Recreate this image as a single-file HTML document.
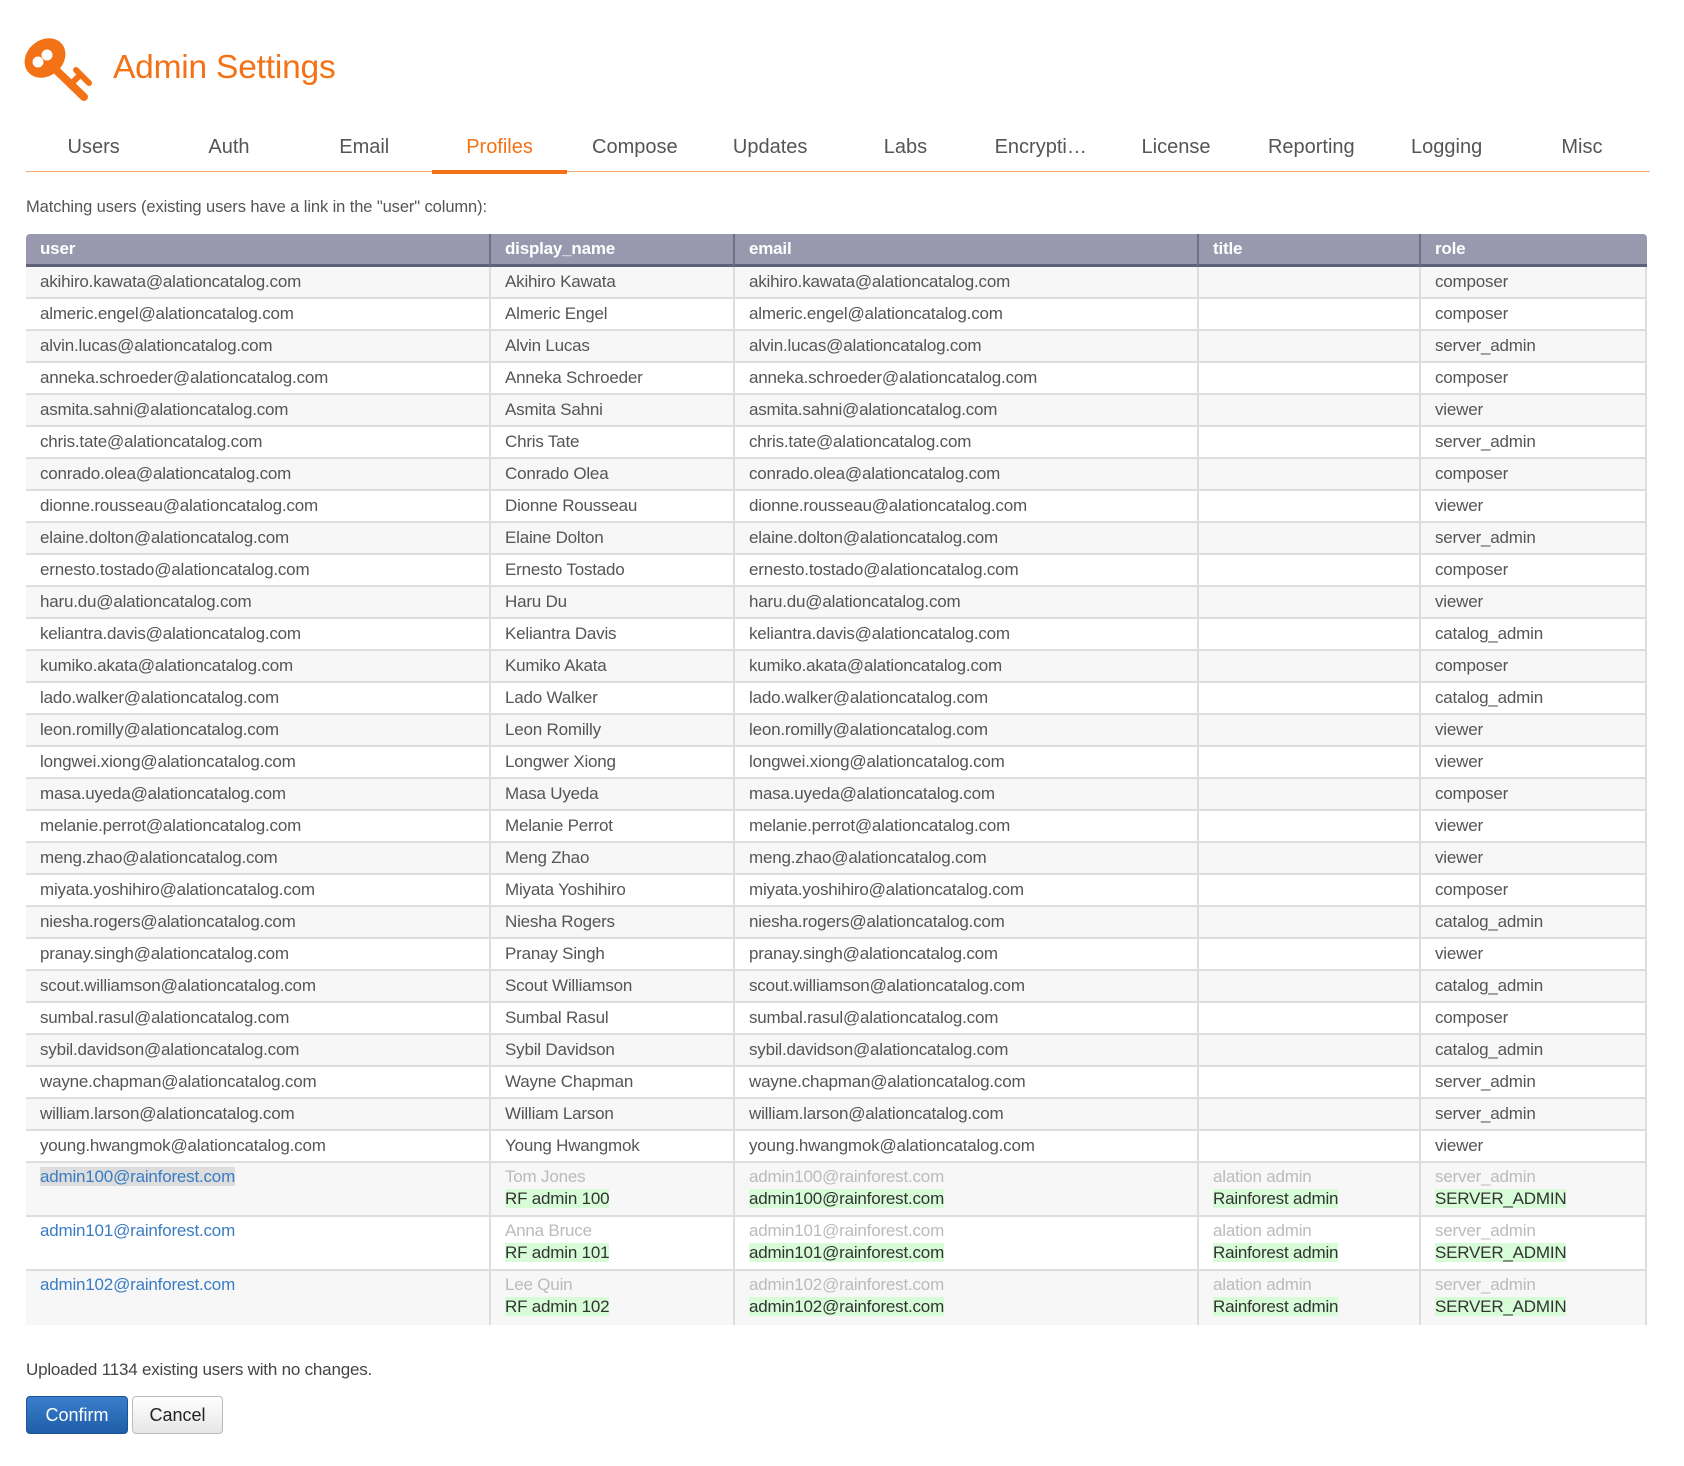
<!DOCTYPE html>
<html><head><meta charset="utf-8">
<style>
*{box-sizing:border-box;margin:0;padding:0}
body{width:1684px;height:1466px;background:#fff;font-family:"Liberation Sans",Arial,sans-serif;color:#444;position:relative;overflow:hidden}
.title{position:absolute;left:113px;top:49px;font-size:33.5px;color:#f47216;letter-spacing:-0.2px}
.tabs{position:absolute;left:26px;top:132px;width:1624px;height:40px;border-bottom:1px solid #f5a878;display:flex}
.tabs div{width:135.3px;text-align:center;font-size:20px;color:#555;line-height:30px;position:relative}
.tabs div.act{color:#f47216}
.tabs div.act:after{content:"";position:absolute;left:0;right:0;bottom:-3px;height:4px;background:#f47216}
.match{position:absolute;left:26px;top:198px;font-size:16.5px;color:#555;letter-spacing:-0.1px}
table{position:absolute;left:26px;top:234px;width:1621px;border-collapse:separate;border-spacing:0;table-layout:fixed;font-size:17px;letter-spacing:-0.2px}
th{background:#9899af;color:#fff;text-align:left;font-weight:bold;font-size:17px;height:30px;line-height:30px;padding:0 14px;border-bottom:3px solid #5f607a;border-left:2px solid #6f7088}
th:first-child{border-left:none;border-top-left-radius:4px}
th:last-child{border-top-right-radius:4px}
td{height:32px;line-height:30px;padding:0 14px;border-bottom:2px solid #ddd;border-left:2px solid #ddd;color:#555;white-space:nowrap;overflow:hidden}
td:first-child{border-left:none}
td:last-child{border-right:2px solid #ddd}
tr:nth-child(even) td{background:#f7f7f7}
tr:nth-child(odd) td{background:#fff}
tr.d td{height:54px;line-height:22px;vertical-align:top;padding-top:3px}
tr.d:last-child td{border-bottom:none}
.o{color:#bbb;display:block}
.n{background:#d8fcd8;color:#333}
a{color:#3a7cc4;text-decoration:none}
.sel{background:#ddd}
.up{position:absolute;left:26px;top:1360px;font-size:17px;color:#444;letter-spacing:-0.2px}
.btn{position:absolute;top:1396px;height:38px;border-radius:4px;font-size:18px;line-height:36px;text-align:center}
.cf{left:26px;width:102px;background:linear-gradient(#3a7ecb,#1f5ea8);color:#fff;border:1px solid #1c5396}
.cc{left:132px;width:91px;background:linear-gradient(#fff,#e6e6e6);color:#222;border:1px solid #bbb}
</style></head><body>
<svg style="position:absolute;left:0;top:0" width="120" height="120" viewBox="0 0 120 120">
<g fill="#f47216" stroke="#f47216">
<ellipse cx="45" cy="58" rx="18" ry="22" transform="rotate(50 45 58)" stroke="none"/>
<line x1="54" y1="68" x2="84" y2="97" stroke-width="8" stroke-linecap="round"/>
<line x1="71" y1="84" x2="80" y2="75" stroke-width="6" stroke-linecap="round"/>
<line x1="76" y1="70" x2="89" y2="83" stroke-width="6" stroke-linecap="round"/>
</g>
<circle cx="38" cy="62" r="5.5" fill="#fff"/>
<circle cx="47" cy="55" r="5.5" fill="#fff"/>
</svg>
<div class="title">Admin Settings</div>
<div class="tabs"><div>Users</div><div>Auth</div><div>Email</div><div class="act">Profiles</div><div>Compose</div><div>Updates</div><div>Labs</div><div>Encrypti…</div><div>License</div><div>Reporting</div><div>Logging</div><div>Misc</div></div>
<div class="match">Matching users (existing users have a link in the "user" column):</div>
<table>
<colgroup><col style="width:463px"><col style="width:244px"><col style="width:464px"><col style="width:222px"><col style="width:228px"></colgroup>
<tr><th>user</th><th>display_name</th><th>email</th><th>title</th><th>role</th></tr>
<tr><td>akihiro.kawata@alationcatalog.com</td><td>Akihiro Kawata</td><td>akihiro.kawata@alationcatalog.com</td><td></td><td>composer</td></tr>
<tr><td>almeric.engel@alationcatalog.com</td><td>Almeric Engel</td><td>almeric.engel@alationcatalog.com</td><td></td><td>composer</td></tr>
<tr><td>alvin.lucas@alationcatalog.com</td><td>Alvin Lucas</td><td>alvin.lucas@alationcatalog.com</td><td></td><td>server_admin</td></tr>
<tr><td>anneka.schroeder@alationcatalog.com</td><td>Anneka Schroeder</td><td>anneka.schroeder@alationcatalog.com</td><td></td><td>composer</td></tr>
<tr><td>asmita.sahni@alationcatalog.com</td><td>Asmita Sahni</td><td>asmita.sahni@alationcatalog.com</td><td></td><td>viewer</td></tr>
<tr><td>chris.tate@alationcatalog.com</td><td>Chris Tate</td><td>chris.tate@alationcatalog.com</td><td></td><td>server_admin</td></tr>
<tr><td>conrado.olea@alationcatalog.com</td><td>Conrado Olea</td><td>conrado.olea@alationcatalog.com</td><td></td><td>composer</td></tr>
<tr><td>dionne.rousseau@alationcatalog.com</td><td>Dionne Rousseau</td><td>dionne.rousseau@alationcatalog.com</td><td></td><td>viewer</td></tr>
<tr><td>elaine.dolton@alationcatalog.com</td><td>Elaine Dolton</td><td>elaine.dolton@alationcatalog.com</td><td></td><td>server_admin</td></tr>
<tr><td>ernesto.tostado@alationcatalog.com</td><td>Ernesto Tostado</td><td>ernesto.tostado@alationcatalog.com</td><td></td><td>composer</td></tr>
<tr><td>haru.du@alationcatalog.com</td><td>Haru Du</td><td>haru.du@alationcatalog.com</td><td></td><td>viewer</td></tr>
<tr><td>keliantra.davis@alationcatalog.com</td><td>Keliantra Davis</td><td>keliantra.davis@alationcatalog.com</td><td></td><td>catalog_admin</td></tr>
<tr><td>kumiko.akata@alationcatalog.com</td><td>Kumiko Akata</td><td>kumiko.akata@alationcatalog.com</td><td></td><td>composer</td></tr>
<tr><td>lado.walker@alationcatalog.com</td><td>Lado Walker</td><td>lado.walker@alationcatalog.com</td><td></td><td>catalog_admin</td></tr>
<tr><td>leon.romilly@alationcatalog.com</td><td>Leon Romilly</td><td>leon.romilly@alationcatalog.com</td><td></td><td>viewer</td></tr>
<tr><td>longwei.xiong@alationcatalog.com</td><td>Longwer Xiong</td><td>longwei.xiong@alationcatalog.com</td><td></td><td>viewer</td></tr>
<tr><td>masa.uyeda@alationcatalog.com</td><td>Masa Uyeda</td><td>masa.uyeda@alationcatalog.com</td><td></td><td>composer</td></tr>
<tr><td>melanie.perrot@alationcatalog.com</td><td>Melanie Perrot</td><td>melanie.perrot@alationcatalog.com</td><td></td><td>viewer</td></tr>
<tr><td>meng.zhao@alationcatalog.com</td><td>Meng Zhao</td><td>meng.zhao@alationcatalog.com</td><td></td><td>viewer</td></tr>
<tr><td>miyata.yoshihiro@alationcatalog.com</td><td>Miyata Yoshihiro</td><td>miyata.yoshihiro@alationcatalog.com</td><td></td><td>composer</td></tr>
<tr><td>niesha.rogers@alationcatalog.com</td><td>Niesha Rogers</td><td>niesha.rogers@alationcatalog.com</td><td></td><td>catalog_admin</td></tr>
<tr><td>pranay.singh@alationcatalog.com</td><td>Pranay Singh</td><td>pranay.singh@alationcatalog.com</td><td></td><td>viewer</td></tr>
<tr><td>scout.williamson@alationcatalog.com</td><td>Scout Williamson</td><td>scout.williamson@alationcatalog.com</td><td></td><td>catalog_admin</td></tr>
<tr><td>sumbal.rasul@alationcatalog.com</td><td>Sumbal Rasul</td><td>sumbal.rasul@alationcatalog.com</td><td></td><td>composer</td></tr>
<tr><td>sybil.davidson@alationcatalog.com</td><td>Sybil Davidson</td><td>sybil.davidson@alationcatalog.com</td><td></td><td>catalog_admin</td></tr>
<tr><td>wayne.chapman@alationcatalog.com</td><td>Wayne Chapman</td><td>wayne.chapman@alationcatalog.com</td><td></td><td>server_admin</td></tr>
<tr><td>william.larson@alationcatalog.com</td><td>William Larson</td><td>william.larson@alationcatalog.com</td><td></td><td>server_admin</td></tr>
<tr><td>young.hwangmok@alationcatalog.com</td><td>Young Hwangmok</td><td>young.hwangmok@alationcatalog.com</td><td></td><td>viewer</td></tr>
<tr class="d"><td><a class="sel">admin100@rainforest.com</a></td><td><span class="o">Tom Jones</span><span class="n">RF admin 100</span></td><td><span class="o">admin100@rainforest.com</span><span class="n">admin100@rainforest.com</span></td><td><span class="o">alation admin</span><span class="n">Rainforest admin</span></td><td><span class="o">server_admin</span><span class="n">SERVER_ADMIN</span></td></tr>
<tr class="d"><td><a>admin101@rainforest.com</a></td><td><span class="o">Anna Bruce</span><span class="n">RF admin 101</span></td><td><span class="o">admin101@rainforest.com</span><span class="n">admin101@rainforest.com</span></td><td><span class="o">alation admin</span><span class="n">Rainforest admin</span></td><td><span class="o">server_admin</span><span class="n">SERVER_ADMIN</span></td></tr>
<tr class="d"><td><a>admin102@rainforest.com</a></td><td><span class="o">Lee Quin</span><span class="n">RF admin 102</span></td><td><span class="o">admin102@rainforest.com</span><span class="n">admin102@rainforest.com</span></td><td><span class="o">alation admin</span><span class="n">Rainforest admin</span></td><td><span class="o">server_admin</span><span class="n">SERVER_ADMIN</span></td></tr>
</table>
<div class="up">Uploaded 1134 existing users with no changes.</div>
<div class="btn cf">Confirm</div>
<div class="btn cc">Cancel</div>
</body></html>
